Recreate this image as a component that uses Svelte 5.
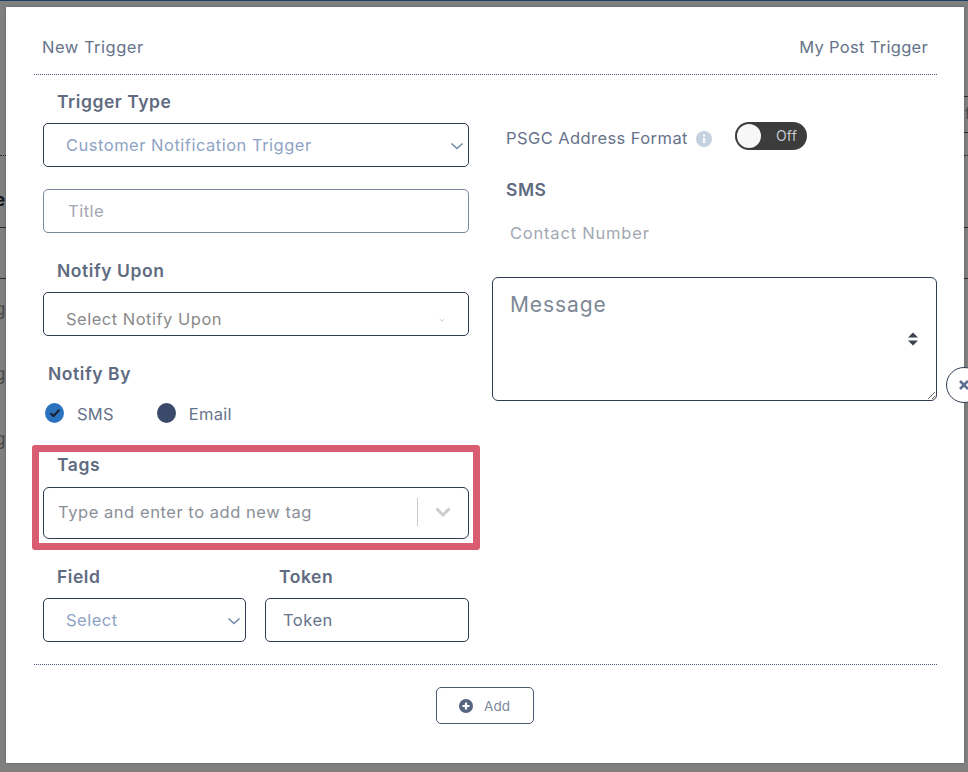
<script>
  const backdropRules = [
    { side: 'left', y: 227 },
    { side: 'left', y: 278 },
    { side: 'right', y: 96 },
    { side: 'right', y: 132 },
    { side: 'right', y: 227 },
    { side: 'right', y: 278 }
  ];
  const backdropGlyphs = [
    { side: 'left', y: 188, text: 'e', bold: true },
    { side: 'left', y: 297, text: 'g' },
    { side: 'left', y: 362, text: 'g' },
    { side: 'left', y: 427, text: 'g' },
    { side: 'right', y: 102, text: 'f' }
  ];
</script>

<div class="page">
  <div class="topline"></div>
  {#each backdropRules as rule}
    <div class="rule {rule.side}" style:top="{rule.y}px"></div>
  {/each}
  <div class="dots left"></div>
  <div class="dots right"></div>
  {#each backdropGlyphs as glyph}
    <span class="glyph {glyph.side}" class:bold={glyph.bold} style:top="{glyph.y}px">{glyph.text}</span>
  {/each}

  <div class="modal">
    <header class="head">
      <span class="head-left">New Trigger</span>
      <span>My Post Trigger</span>
    </header>

    <div class="columns">
      <div class="col-left">
        <label class="label" for="type">Trigger Type</label>
        <div class="select-wrap">
          <select id="type" class="control blue-text">
            <option>Customer Notification Trigger</option>
          </select>
          <svg class="chev" viewBox="0 0 14 8"><path d="M1.5 1.5 7 6.5l5.5-5" /></svg>
        </div>

        <input class="control title" placeholder="Title" />

        <label class="label upon" for="upon">Notify Upon</label>
        <div class="select-wrap">
          <div id="upon" class="control upon-box">Select Notify Upon</div>
          <svg class="chev tiny" viewBox="0 0 14 8"><path d="M1.5 1.5 7 6.5l5.5-5" /></svg>
        </div>

        <div class="label by">Notify By</div>
        <div class="radios">
          <span class="radio checked">
            <svg viewBox="0 0 12 10"><path d="M1.5 5.2 4.5 8l6-6.2" /></svg>
          </span>
          <span class="radio-text">SMS</span>
          <span class="radio unchecked"></span>
          <span class="radio-text">Email</span>
        </div>

        <div class="tags">
          <div class="highlight"></div>
          <div class="label tags-label">Tags</div>
          <div class="tag-input">
            <span class="tag-text">Type and enter to add new tag</span>
            <span class="sep"></span>
            <svg class="tag-chev" viewBox="0 0 20 20"><path d="M3.5 6.5 10 13l6.5-6.5" /></svg>
          </div>
        </div>

        <div class="pair">
          <div>
            <label class="label" for="field">Field</label>
            <div class="select-wrap">
              <select id="field" class="control blue-text">
                <option>Select</option>
              </select>
              <svg class="chev" viewBox="0 0 14 8"><path d="M1.5 1.5 7 6.5l5.5-5" /></svg>
            </div>
          </div>
          <div>
            <label class="label" for="token">Token</label>
            <input id="token" class="control token" placeholder="Token" />
          </div>
        </div>
      </div>

      <div class="col-right">
        <div class="psgc">
          <span>PSGC Address Format</span>
          <svg class="info" viewBox="0 0 16 16">
            <circle cx="8" cy="8" r="8" />
            <rect x="7" y="7" width="2.2" height="5" fill="#fff" />
            <rect x="7" y="3.6" width="2.2" height="2" fill="#fff" />
          </svg>
          <div class="toggle"><span class="knob"></span><span class="toggle-text">Off</span></div>
        </div>
        <div class="label sms">SMS</div>
        <div class="contact">Contact Number</div>
        <div class="msg-wrap">
          <textarea class="message" placeholder="Message"></textarea>
          <svg class="spin" viewBox="0 0 12 14">
            <path d="M6 0.5 11 5.5H1Z" />
            <path d="M1 8.5H11L6 13.5Z" />
          </svg>
        </div>
      </div>
    </div>

    <footer class="foot">
      <button class="add">
        <svg viewBox="0 0 14 14">
          <circle cx="7" cy="7" r="7" />
          <path class="plus" d="M7 3.5v7M3.5 7h7" />
        </svg>
        Add
      </button>
    </footer>
  </div>

  <div class="close">
    <svg viewBox="0 0 12 12"><path d="M2 2 10 10M10 2 2 10" /></svg>
  </div>
</div>

<style>
  :global(body) {
    margin: 0;
    background: #808080;
  }

  .page {
    position: relative;
    width: 968px;
    height: 772px;
    overflow: hidden;
    background: #808080;
    font-family: Inter, "Open Sans", sans-serif;
    color: #5f6b80;
  }

  .topline {
    height: 1px;
    background: #1c3f66;
  }

  .rule {
    position: absolute;
    height: 1px;
    background: #2c2c2c;
  }
  .rule.left { left: 0; width: 6px; }
  .rule.right { left: 964px; width: 4px; }

  .dots {
    position: absolute;
    top: 155px;
    height: 0;
    border-top: 1px dotted #2c2c2c;
  }
  .dots.left { left: 0; width: 6px; }
  .dots.right { left: 964px; width: 4px; }

  .glyph {
    position: absolute;
    font-size: 17px;
    line-height: 24px;
    color: #4a4a4a;
  }
  .glyph.left { left: -5px; }
  .glyph.right { left: 965px; font-size: 15px; }
  .glyph.bold { font-weight: 700; color: #12161f; }

  .modal {
    position: absolute;
    left: 6px;
    top: 7px;
    width: 958px;
    height: 756px;
    box-sizing: border-box;
    padding: 0 27px 0 28px;
    background: #fff;
    box-shadow: 0 0 3px rgba(0, 0, 0, 0.25);
  }

  .head {
    display: flex;
    justify-content: space-between;
    align-items: center;
    height: 68px;
    padding: 12px 9px 0 8px;
    box-sizing: border-box;
    border-bottom: 1px dotted #47587a;
    font-size: 16.5px;
    letter-spacing: 0.3px;
    color: #66738a;
  }
  .head-left { letter-spacing: 0.5px; }

  .columns {
    display: grid;
    grid-template-columns: 426px 445px;
    gap: 23px;
    padding-left: 9px;
    height: 590px;
    box-sizing: border-box;
    border-bottom: 1px dotted #47587a;
    width: 903px;
  }
  .col-left { min-width: 0; }

  .label {
    display: block;
    margin-left: 14px;
    font-size: 17.5px;
    font-weight: 600;
    line-height: 22px;
    letter-spacing: 0.55px;
    color: #5f6b80;
  }
  .col-left > .label:first-child { margin-top: 16px; margin-bottom: 10px; }

  .select-wrap { position: relative; }

  .control {
    display: block;
    width: 100%;
    height: 44px;
    box-sizing: border-box;
    padding: 0 22px;
    border: 1px solid #2f3b52;
    border-radius: 5px;
    background: #fff;
    font: inherit;
    font-size: 16.5px;
    letter-spacing: 0.5px;
    outline: none;
    appearance: none;
  }
  .blue-text { color: #8ea3c4; }

  .title {
    margin-top: 22px;
    padding-left: 24px;
    border-color: #7a879f;
  }
  .title::placeholder { color: #a2a7b2; opacity: 1; }

  .upon { margin-top: 27px; margin-bottom: 10px; }

  .upon-box {
    padding-top: 14px;
    line-height: 24px;
    color: #8a8a8a;
  }

  .chev {
    position: absolute;
    right: 5px;
    top: 19px;
    width: 14px;
    height: 8px;
    fill: none;
    stroke: #7489ad;
    stroke-width: 1.6;
  }
  .chev.tiny {
    right: 24px;
    top: 26px;
    width: 6px;
    height: 4px;
    stroke: #b5b8bf;
  }

  .by { margin: 27px 0 0 5px; }

  .radios {
    display: flex;
    align-items: center;
    height: 20px;
    margin: 18px 0 0 2px;
    font-size: 16.5px;
  }
  .radio {
    display: flex;
    align-items: center;
    justify-content: center;
    flex: none;
    width: 19px;
    height: 20px;
    border-radius: 50%;
  }
  .radio.checked { background: #2a73bf; }
  .radio.checked svg {
    width: 12px;
    height: 10px;
    fill: none;
    stroke: #1a2233;
    stroke-width: 2.2;
  }
  .radio.unchecked {
    margin-left: 43px;
    background: #3b4a6b;
  }
  .radio-text {
    margin-left: 13px;
    padding-top: 2px;
    letter-spacing: 0.25px;
    color: #66738a;
  }

  .tags {
    position: relative;
    margin-top: 31px;
  }
  .highlight {
    position: absolute;
    inset: -9px -11px -11px -11px;
    border: 7.5px solid #d95d70;
    border-radius: 3px;
    pointer-events: none;
  }
  .tags-label { margin-bottom: 11px; }

  .tag-input {
    display: flex;
    align-items: center;
    height: 52px;
    box-sizing: border-box;
    padding: 0 15px 2px 14px;
    border: 1px solid #2f3b52;
    border-radius: 6px;
  }
  .tag-text {
    flex: 1;
    font-size: 16.5px;
    letter-spacing: 0.55px;
    color: #8a8f98;
  }
  .sep {
    width: 1px;
    height: 28px;
    background: #cccccc;
    margin-right: 15px;
  }
  .tag-chev {
    width: 20px;
    height: 20px;
    fill: none;
    stroke: #cccccc;
    stroke-width: 3;
  }

  .pair {
    display: grid;
    grid-template-columns: 203px 204px;
    gap: 19px;
    margin-top: 27px;
  }
  .pair .label { margin-bottom: 10px; }
  .pair .token {
    padding-left: 17px;
    color: #66738a;
  }
  .token::placeholder { color: #66738a; opacity: 1; }

  .psgc {
    display: flex;
    align-items: center;
    margin: 48px 0 0 14px;
    height: 30px;
    font-size: 16.5px;
    letter-spacing: 0.42px;
    color: #66738a;
  }
  .info {
    width: 16px;
    height: 16px;
    margin: 1px 0 0 8px;
    fill: #c5d0e0;
  }
  .toggle {
    position: relative;
    width: 72px;
    height: 28px;
    margin: -4px 0 0 23px;
    border-radius: 14px;
    background: #3c3c3c;
  }
  .knob {
    position: absolute;
    left: 2px;
    top: 2px;
    width: 24px;
    height: 24px;
    border-radius: 50%;
    background: #f7f7f7;
  }
  .toggle-text {
    position: absolute;
    left: 41px;
    top: 4px;
    font-size: 14px;
    line-height: 20px;
    letter-spacing: 0.2px;
    color: #c4c8cf;
  }

  .sms { margin: 26px 0 0 14px; }

  .contact {
    margin: 21px 0 0 18px;
    font-size: 16.5px;
    line-height: 22px;
    letter-spacing: 0.8px;
    color: #a2a7b2;
  }

  .msg-wrap {
    position: relative;
    margin-top: 33px;
  }
  .message {
    display: block;
    width: 100%;
    height: 124px;
    box-sizing: border-box;
    padding: 14px 17px;
    border: 1px solid #2f3b52;
    border-radius: 6px;
    font: inherit;
    font-size: 21px;
    letter-spacing: 0.9px;
    outline: none;
  }
  .message::placeholder { color: #7d8795; opacity: 1; }
  .spin {
    position: absolute;
    right: 18px;
    top: 55px;
    width: 12px;
    height: 14px;
    fill: #3c4350;
  }

  .foot {
    display: flex;
    justify-content: center;
    padding: 22px 2px 0 0;
  }
  .add {
    display: flex;
    align-items: center;
    justify-content: center;
    gap: 11px;
    width: 98px;
    height: 37px;
    padding: 0;
    border: 1px solid #4b5872;
    border-radius: 5px;
    background: #fff;
    font: inherit;
    font-size: 13.5px;
    color: #7d889b;
  }
  .add svg {
    width: 14px;
    height: 14px;
    fill: #56657f;
  }
  .plus {
    fill: none;
    stroke: #fff;
    stroke-width: 2.2;
  }

  .close {
    position: absolute;
    left: 946px;
    top: 367px;
    width: 36px;
    height: 36px;
    box-sizing: border-box;
    border: 1px solid #2f3b52;
    border-radius: 50%;
    background: #fff;
    display: flex;
    align-items: center;
    justify-content: center;
  }
  .close svg {
    width: 12px;
    height: 12px;
    fill: none;
    stroke: #5c6f90;
    stroke-width: 2.6;
  }
</style>
